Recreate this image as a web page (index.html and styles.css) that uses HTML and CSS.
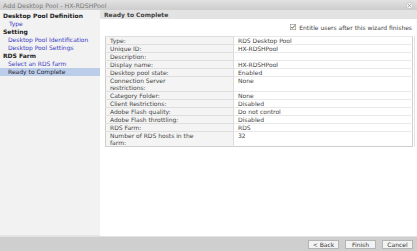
FILE: index.html
```html
<!DOCTYPE html>
<html>
<head>
    <title>Add Desktop Pool</title>
    <link rel="stylesheet" href="styles.css">
</head>
<body>
    <div class="window">
        <div class="titlebar">
            <span class="title">Add Desktop Pool - HX-RDSHPool</span>
            <span class="close">
                <svg width="7" height="7" viewBox="0 0 7 7">
                    <circle cx="3.5" cy="3.5" r="3.2" fill="#f4f4f4" stroke="#b0b0b0" stroke-width="0.6"/>
                    <path d="M2.2 2.2 L4.8 4.8 M4.8 2.2 L2.2 4.8" stroke="#888" stroke-width="0.8"/>
                </svg>
            </span>
        </div>

        <div class="main">
            <div class="sidebar">
                <div class="step">Desktop Pool Definition</div>
                <div class="link sub">Type</div>
                <div class="step">Setting</div>
                <div class="link">Desktop Pool Identification</div>
                <div class="link">Desktop Pool Settings</div>
                <div class="step">RDS Farm</div>
                <div class="link">Select an RDS farm</div>
                <div class="link selected">Ready to Complete</div>
            </div>

            <div class="content">
                <div class="header">Ready to Complete</div>

                <div class="entitle">
                    <span class="check">
                        <svg width="6" height="6" viewBox="0 0 6 6">
                            <rect x="0.3" y="0.3" width="5.4" height="5.4" fill="#fff" stroke="#8a8a8a" stroke-width="0.6"/>
                            <path d="M1.3 3 L2.5 4.3 L4.8 1.4" fill="none" stroke="#333" stroke-width="0.8"/>
                        </svg>
                    </span>
                    Entitle users after this wizard finishes
                </div>

                <div class="summary-wrap">
                    <table class="summary">
                        <colgroup>
                            <col class="label-col">
                            <col>
                        </colgroup>
                        <tr><td class="label">Type:</td><td>RDS Desktop Pool</td></tr>
                        <tr><td class="label">Unique ID:</td><td>HX-RDSHPool</td></tr>
                        <tr><td class="label">Description:</td><td></td></tr>
                        <tr><td class="label">Display name:</td><td>HX-RDSHPool</td></tr>
                        <tr><td class="label">Desktop pool state:</td><td>Enabled</td></tr>
                        <tr><td class="label">Connection Server<br>restrictions:</td><td>None</td></tr>
                        <tr><td class="label">Category Folder:</td><td>None</td></tr>
                        <tr><td class="label">Client Restrictions:</td><td>Disabled</td></tr>
                        <tr><td class="label">Adobe Flash quality:</td><td>Do not control</td></tr>
                        <tr><td class="label">Adobe Flash throttling:</td><td>Disabled</td></tr>
                        <tr><td class="label">RDS Farm:</td><td>RDS</td></tr>
                        <tr><td class="label">Number of RDS hosts in the<br>farm:</td><td>32</td></tr>
                    </table>
                    <div class="scroll-edge"></div>
                </div>
            </div>
        </div>

        <div class="footer">
            <button type="button">&lt; Back</button>
            <button type="button">Finish</button>
            <button type="button">Cancel</button>
        </div>
    </div>
</body>
</html>
```

FILE: styles.css
```css
body {
    margin: 0;
    background-color: #fff;
    color: #333;
    font-family: "DejaVu Sans", Verdana, sans-serif;
    font-size: 6px;
}

.window {
    width: 417px;
    height: 251px;
    display: flex;
    flex-direction: column;
}

.titlebar {
    height: 10px;
    display: flex;
    align-items: center;
    justify-content: space-between;
    padding: 0 4px 0 3px;
    background: linear-gradient(#e2e2e2, #cdcdcd);
    color: #7a7a7a;
    font-size: 6.3px;
}

.close {
    display: flex;
}

.main {
    flex: 1;
    display: flex;
}

.sidebar {
    width: 100px;
    padding-top: 2px;
    background-color: #f2f2f2;
    border-bottom: 1px solid #e6e6e6;
}

.step,
.link {
    height: 8px;
    line-height: 8px;
    padding-left: 3px;
    white-space: nowrap;
}

.step {
    font-weight: bold;
    color: #222;
}

.link {
    padding-left: 8px;
    color: #3b3bc4;
}

.link.sub {
    padding-left: 9px;
}

.selected {
    background-color: #bccdea;
    color: #223;
}

.content {
    flex: 1;
    display: flex;
    flex-direction: column;
}

.header {
    height: 9px;
    line-height: 9px;
    padding-left: 4px;
    background-color: #e3e3e3;
    color: #444;
    font-weight: bold;
}

.entitle {
    display: flex;
    align-items: center;
    justify-content: flex-end;
    gap: 3px;
    height: 8px;
    margin: 4px 5px 5px 0;
    color: #444;
}

.check {
    display: flex;
}

.summary-wrap {
    display: flex;
    margin-left: 5px;
    margin-right: 2px;
}

.summary {
    width: 308px;
    table-layout: fixed;
    border-collapse: collapse;
    border: 1px solid #cfcfcf;
    font-size: 6px;
}

.label-col {
    width: 128px;
}

.summary td {
    padding: 0 4px;
    height: 7px;
    line-height: 7px;
    vertical-align: top;
    border-top: 1px solid #e8e8e8;
    color: #444;
    white-space: nowrap;
}

.summary td.label {
    background-color: #f4f4f4;
    border-right: 1px solid #dcdcdc;
    border-top-color: #dedede;
}

.scroll-edge {
    width: 1px;
    margin-left: 1px;
    background-color: #e4e4e4;
}

.footer {
    height: 15px;
    display: flex;
    align-items: center;
    justify-content: flex-end;
    gap: 6px;
    padding-right: 4px;
    background-color: #cfcfcf;
    border-top: 1px solid #e2e2e2;
    box-sizing: border-box;
}

button {
    height: 9px;
    width: 31px;
    padding: 0;
    border: 1px solid #b4b4b4;
    background-color: #f3f3f3;
    color: #333;
    font-family: "DejaVu Sans", Verdana, sans-serif;
    font-size: 6px;
    line-height: 7px;
}
```
